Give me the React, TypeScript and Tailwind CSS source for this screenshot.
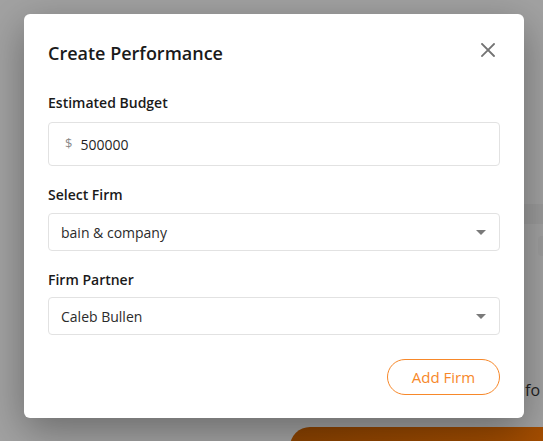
import React from "react";

const font = { fontFamily: '"Open Sans", "Noto Sans", Arial, sans-serif' };

function Caret() {
  return (
    <svg width="10" height="5" viewBox="0 0 10 5" className="shrink-0">
      <path d="M0 0 L10 0 L5 5 Z" fill="#7a7a7a" />
    </svg>
  );
}

function SelectBox({ value }: { value: string }) {
  return (
    <div className="h-[38px] w-full rounded-[4px] border border-[#e2e2e2] flex items-center justify-between pl-[12px] pr-[13px]">
      <span className="text-[14px] text-[#2b2b2b]">{value}</span>
      <Caret />
    </div>
  );
}

export default function App() {
  return (
    <div className="relative w-[543px] h-[441px] overflow-hidden bg-[#a2a2a2]" style={font}>
      {/* background page content under overlay */}
      <div className="absolute left-[524px] top-[204px] w-[40px] h-[20px] bg-[#9b9b9b]" />
      <div className="absolute left-[538px] top-[236px] w-[20px] h-[20px] rounded-[4px] bg-[#9d9d9d]" />
      <div className="absolute left-[525px] top-[378px] text-[16px] text-[#1f1f1f]">fo</div>
      <div className="absolute left-[290px] top-[427px] w-[300px] h-[40px] rounded-l-full bg-gradient-to-r from-[#8a4200] to-[#a84f00]" />

      {/* modal */}
      <div className="absolute left-[24px] top-[14px] w-[500px] h-[404px] bg-white rounded-[6px] shadow-[0_12px_40px_rgba(0,0,0,0.35)] px-[24px] pt-[26px] flex flex-col">
        <div className="flex items-start justify-between">
          <h2 className="text-[18px] leading-[26px] font-semibold text-[#1a1a1a]">Create Performance</h2>
          <svg width="14" height="14" viewBox="0 0 14 14" className="mt-[3px] mr-[5px]">
            <path d="M1 1 L13 13 M13 1 L1 13" stroke="#737373" strokeWidth="1.8" strokeLinecap="square" />
          </svg>
        </div>

        <div className="mt-[27px] text-[14px] leading-[20px] font-semibold text-[#1a1a1a]">Estimated Budget</div>
        <div className="mt-[9px] h-[44px] w-full rounded-[4px] border border-[#e2e2e2] flex items-center pl-[16px]">
          <span className="text-[13px] text-[#8a8a8a] mr-[8px]">$</span>
          <span className="text-[14px] text-[#1f1f1f]">500000</span>
        </div>

        <div className="mt-[19px] text-[14px] leading-[20px] font-semibold text-[#1a1a1a]">Select Firm</div>
        <div className="mt-[8px]">
          <SelectBox value="bain & company" />
        </div>

        <div className="mt-[19px] text-[14px] leading-[20px] font-semibold text-[#1a1a1a]">Firm Partner</div>
        <div className="mt-[7px]">
          <SelectBox value="Caleb Bullen" />
        </div>

        <div className="mt-[24px] flex justify-end">
          <button className="w-[113px] h-[36px] rounded-full border border-[#f7882a] text-[#f7882a] text-[15px] flex items-center justify-center">
            Add Firm
          </button>
        </div>
      </div>
    </div>
  );
}
